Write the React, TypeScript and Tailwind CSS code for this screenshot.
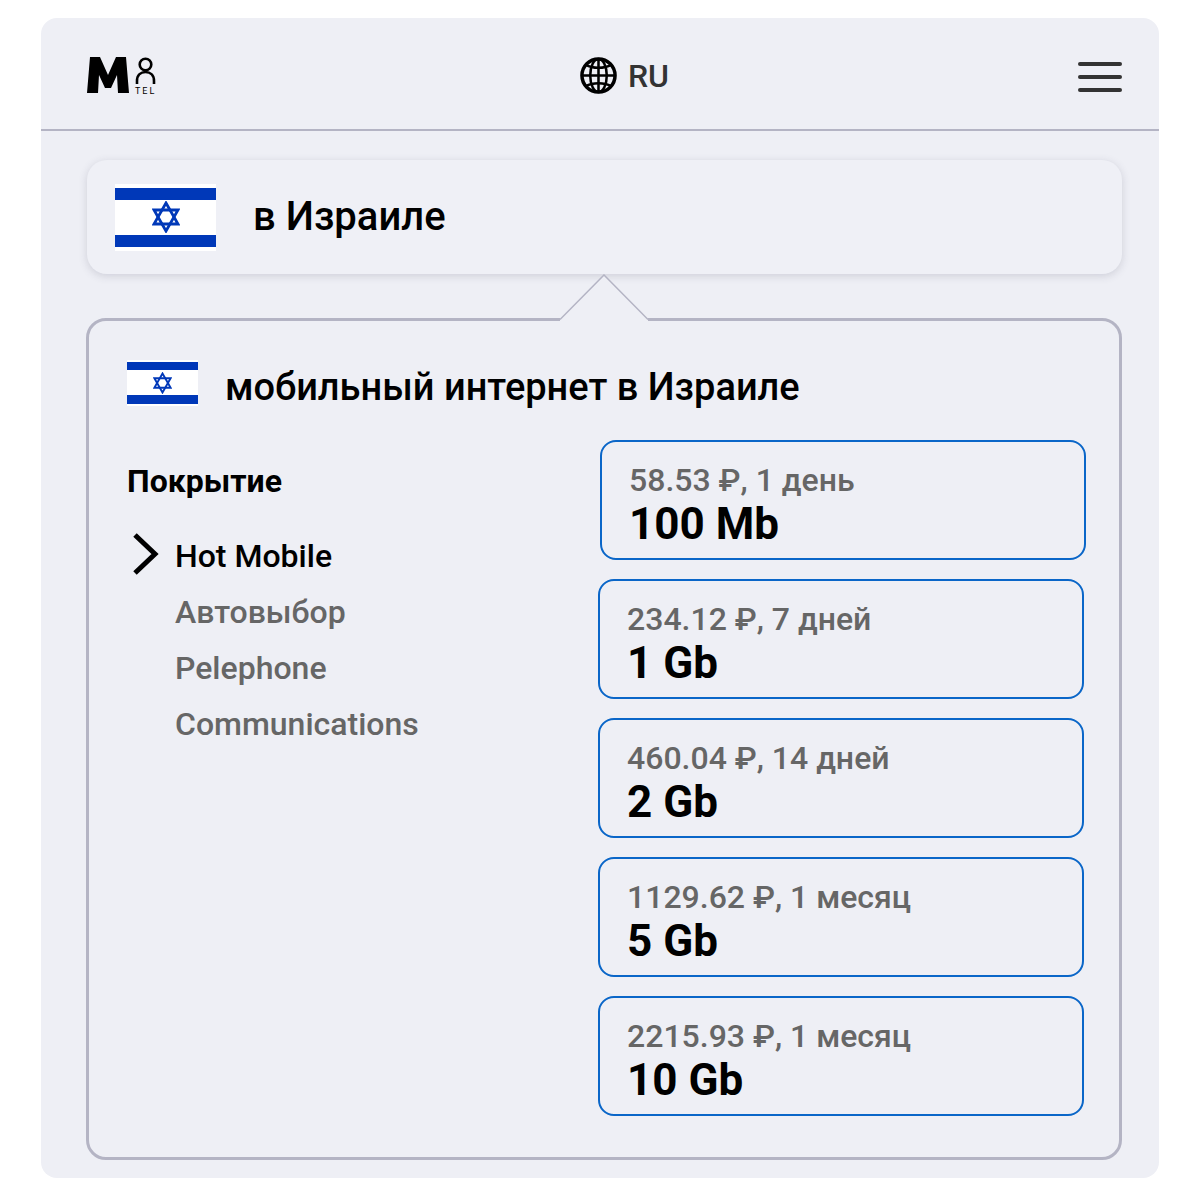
const plans = [
  { price: '234.12 ₽, 7 дней', size: '1 Gb' },
  { price: '460.04 ₽, 14 дней', size: '2 Gb' },
  { price: '1129.62 ₽, 1 месяц', size: '5 Gb' },
  { price: '2215.93 ₽, 1 месяц', size: '10 Gb' },
];

const operators = ['Автовыбор', 'Pelephone', 'Communications'];

function StarOfDavid({ className }: { className: string }) {
  return (
    <svg viewBox="0 0 28 32" className={className} fill="none" stroke="#0038b8" strokeWidth="2.8">
      <path d="M14 2 L26 23 H2 Z" />
      <path d="M14 30 L2 9 H26 Z" />
    </svg>
  );
}

function Flag({ large }: { large?: boolean }) {
  if (large) {
    return (
      <div className="flex h-[67px] w-[101px] shrink-0 flex-col bg-white py-[4px]">
        <div className="h-[12px] bg-[#0038b8]" />
        <div className="flex flex-1 items-center justify-center">
          <StarOfDavid className="h-[32px] w-[28px]" />
        </div>
        <div className="h-[12px] bg-[#0038b8]" />
      </div>
    );
  }
  return (
    <div className="flex h-[46px] w-[71px] shrink-0 flex-col bg-white py-[2px]">
      <div className="h-[8px] bg-[#0038b8]" />
      <div className="flex flex-1 items-center justify-center">
        <StarOfDavid className="h-[22px] w-[19px]" />
      </div>
      <div className="h-[9px] bg-[#0038b8]" />
    </div>
  );
}

function Logo() {
  return (
    <div className="relative mb-[3px] h-[38px] w-[72px]">
      <svg viewBox="0 0 72 38" className="h-[38px] w-[72px]">
        <path d="M0 38 L3 2 H13 L21 20 L29 2 H39 L42 38 H31 L30 20 L24 33 H18 L12 20 L11 38 Z" fill="#000" />
        <circle cx="58.5" cy="9.5" r="5.8" fill="none" stroke="#000" strokeWidth="2.6" />
        <path d="M50 29 V26 C50 20 54 17 58.5 17 C63 17 67 20 67 26 V29" fill="none" stroke="#000" strokeWidth="2.6" />
      </svg>
      <span className="absolute top-[31px] left-[48px] text-[9px] leading-[11px] tracking-[2px] text-black">
        TEL
      </span>
    </div>
  );
}

function Globe() {
  return (
    <svg viewBox="0 0 38 38" className="h-[37px] w-[37px]" fill="none" stroke="#000" strokeWidth="2.6">
      <circle cx="19" cy="19" r="17" strokeWidth="3.6" />
      <ellipse cx="19" cy="19" rx="8.5" ry="17" />
      <path d="M19 2 V36 M2 19 H36" />
      <path d="M6 8 C13 12 25 12 32 8 M6 30 C13 26 25 26 32 30" />
    </svg>
  );
}

function PlanCard({ price, size, first }: { price: string; size: string; first?: boolean }) {
  return (
    <div
      className={`flex h-[120px] w-[486px] flex-col rounded-[16px] border-2 border-[#0a66c8] pt-[19px] pl-[27px] ${
        first ? 'ml-[2px]' : ''
      }`}
    >
      <div className="text-[32px] leading-[38px] font-medium text-[#666666]">{price}</div>
      <div className="mt-[1px] text-[44px] leading-[48px] font-bold text-black">{size}</div>
    </div>
  );
}

export default function App() {
  return (
    <div className="h-[1200px] bg-white px-[41px] pt-[18px] font-['Roboto',sans-serif]">
      <div className="h-[1160px] rounded-[16px] bg-[#eeeff5]">
        <header className="flex h-[113px] items-center justify-between border-b-2 border-[#b4b4c4] pt-[4px] pr-[37px] pl-[46px]">
          <Logo />
          <div className="flex items-center gap-[11px] pl-[12px]">
            <Globe />
            <span className="text-[32px] leading-none font-medium text-[#333333]">RU</span>
          </div>
          <div className="mt-[2px] flex w-[44px] flex-col gap-[9px]">
            <div className="h-[4px] rounded-full bg-[#333333]" />
            <div className="h-[4px] rounded-full bg-[#333333]" />
            <div className="h-[4px] rounded-full bg-[#333333]" />
          </div>
        </header>

        <div className="px-[46px] pt-[29px]">
          <div className="flex h-[114px] w-[1035px] items-center gap-[37px] rounded-[20px] bg-[#eff0f6] pl-[28px] shadow-[0_2px_8px_rgba(60,60,90,0.18)]">
            <Flag large />
            <span className="text-[40px] leading-none font-medium text-black">в Израиле</span>
          </div>

          <div className="relative mt-[44px] ml-[-1px] h-[842px] w-[1036px] rounded-[20px] border-[3px] border-[#b4b4c4] pt-[39px] pr-[33px] pl-[38px]">
            <svg viewBox="0 0 88 48" className="absolute top-[-47px] left-[471px] h-[48px] w-[88px]">
              <path d="M0 48 V45 L44 1 L88 45 V48 Z" fill="#eeeff5" />
              <path d="M0 45.5 L44 1 L88 45.5" fill="none" stroke="#b4b4c4" strokeWidth="1.5" />
            </svg>

            <div className="flex items-center gap-[27px]">
              <Flag />
              <h1 className="pt-[8px] text-[38px] leading-[38px] font-medium text-black">
                мобильный интернет в Израиле
              </h1>
            </div>

            <div className="mt-[34px] flex justify-between">
              <div className="pt-[21px]">
                <div className="text-[32px] leading-[40px] font-bold text-black">Покрытие</div>
                <div className="relative mt-[27px] pl-[48px]">
                  <svg viewBox="0 0 30 44" className="absolute top-[4px] left-[2px] h-[44px] w-[30px]" fill="none" stroke="#000" strokeWidth="5">
                    <path d="M6 3 L26 22 L6 41" />
                  </svg>
                  <div className="text-[32px] leading-[56px] font-medium text-black">Hot Mobile</div>
                  {operators.map((name) => (
                    <div key={name} className="text-[32px] leading-[56px] font-medium text-[#666666]">
                      {name}
                    </div>
                  ))}
                </div>
              </div>

              <div className="flex flex-col gap-[19px]">
                <PlanCard first price="58.53 ₽, 1 день" size="100 Mb" />
                {plans.map((plan) => (
                  <PlanCard key={plan.size} price={plan.price} size={plan.size} />
                ))}
              </div>
            </div>
          </div>
        </div>
      </div>
    </div>
  );
}
